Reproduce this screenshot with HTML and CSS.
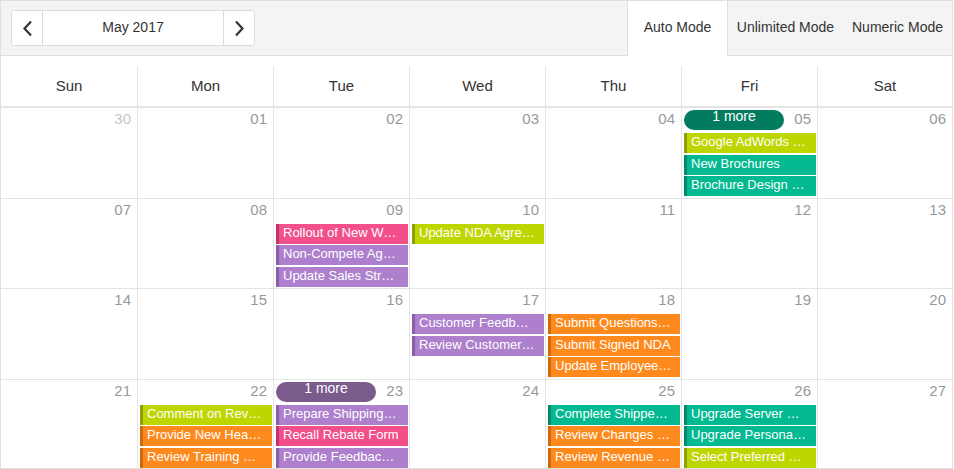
FILE: index.html
```html
<!DOCTYPE html>
<html>
<head>
<meta charset="utf-8">
<link rel="stylesheet" href="styles.css">
</head>
<body>
<div class="scheduler">
  <div class="toolbar">
    <div class="nav">
      <div class="nav-btn prev"><svg width="11" height="17" viewBox="0 0 11 17"><polyline points="9,1.5 2.5,8.5 9,15.5" fill="none" stroke="#333" stroke-width="2.2"/></svg></div>
      <div class="nav-caption">May 2017</div>
      <div class="nav-btn next"><svg width="11" height="17" viewBox="0 0 11 17"><polyline points="2,1.5 8.5,8.5 2,15.5" fill="none" stroke="#333" stroke-width="2.2"/></svg></div>
    </div>
    <div class="tabs">
      <div class="tab tab-auto active">Auto Mode</div>
      <div class="tab tab-unlimited">Unlimited Mode</div>
      <div class="tab tab-numeric">Numeric Mode</div>
    </div>
  </div>
  <div class="head">
    <div class="hcell">Sun</div><div class="hcell">Mon</div><div class="hcell">Tue</div><div class="hcell">Wed</div><div class="hcell">Thu</div><div class="hcell">Fri</div><div class="hcell">Sat</div>
  </div>
  <div class="grid">
    <div class="cell"><div class="top"><span class="date other">30</span></div></div>
    <div class="cell"><div class="top"><span class="date">01</span></div></div>
    <div class="cell"><div class="top"><span class="date">02</span></div></div>
    <div class="cell"><div class="top"><span class="date">03</span></div></div>
    <div class="cell"><div class="top"><span class="date">04</span></div></div>
    <div class="cell"><div class="top"><span class="more more-green">1 more</span><span class="date">05</span></div>
      <div class="appt lime">Google AdWords Strategy</div>
      <div class="appt teal">New Brochures</div>
      <div class="appt teal">Brochure Design Review</div>
    </div>
    <div class="cell"><div class="top"><span class="date">06</span></div></div>

    <div class="cell"><div class="top"><span class="date">07</span></div></div>
    <div class="cell"><div class="top"><span class="date">08</span></div></div>
    <div class="cell"><div class="top"><span class="date">09</span></div>
      <div class="appt pink">Rollout of New Website and Marketing Brochures</div>
      <div class="appt purple">Non-Compete Agreements</div>
      <div class="appt purple">Update Sales Strategy Documents</div>
    </div>
    <div class="cell"><div class="top"><span class="date">10</span></div>
      <div class="appt lime">Update NDA Agreement</div>
    </div>
    <div class="cell"><div class="top"><span class="date">11</span></div></div>
    <div class="cell"><div class="top"><span class="date">12</span></div></div>
    <div class="cell"><div class="top"><span class="date">13</span></div></div>

    <div class="cell"><div class="top"><span class="date">14</span></div></div>
    <div class="cell"><div class="top"><span class="date">15</span></div></div>
    <div class="cell"><div class="top"><span class="date">16</span></div></div>
    <div class="cell"><div class="top"><span class="date">17</span></div>
      <div class="appt purple">Customer Feedback Report Analysis</div>
      <div class="appt purple">Review Customer Feedback Report</div>
    </div>
    <div class="cell"><div class="top"><span class="date">18</span></div>
      <div class="appt orange">Submit Questions Regarding New NDA</div>
      <div class="appt orange">Submit Signed NDA</div>
      <div class="appt orange">Update Employee Files with New NDA</div>
    </div>
    <div class="cell"><div class="top"><span class="date">19</span></div></div>
    <div class="cell"><div class="top"><span class="date">20</span></div></div>

    <div class="cell"><div class="top"><span class="date">21</span></div></div>
    <div class="cell"><div class="top"><span class="date">22</span></div>
      <div class="appt lime">Comment on Revenue Projections</div>
      <div class="appt orange">Provide New Health Insurance Docs</div>
      <div class="appt orange">Review Training Course for any Omissions</div>
    </div>
    <div class="cell"><div class="top"><span class="more more-purple">1 more</span><span class="date">23</span></div>
      <div class="appt purple">Prepare Shipping Cost Analysis Report</div>
      <div class="appt pink">Recall Rebate Form</div>
      <div class="appt purple">Provide Feedback on Shippers</div>
    </div>
    <div class="cell"><div class="top"><span class="date">24</span></div></div>
    <div class="cell"><div class="top"><span class="date">25</span></div>
      <div class="appt teal">Complete Shipper Selection Form</div>
      <div class="appt orange">Review Changes to Health Insurance Coverage</div>
      <div class="appt orange">Review Revenue Projections</div>
    </div>
    <div class="cell"><div class="top"><span class="date">26</span></div>
      <div class="appt teal">Upgrade Server Hardware</div>
      <div class="appt teal">Upgrade Personal Computers</div>
      <div class="appt lime">Select Preferred Shipper</div>
    </div>
    <div class="cell"><div class="top"><span class="date">27</span></div></div>
  </div>
</div>
</body>
</html>
```

FILE: styles.css
```css
* { box-sizing: border-box; }
html, body { margin: 0; padding: 0; background: #fff; }
body { font-family: "Liberation Sans", Arial, sans-serif; color: #333; }

.scheduler {
  width: 953px;
  height: 469px;
  border: 1px solid #e0e0e0;
  display: flex;
  flex-direction: column;
}

.toolbar {
  height: 55px;
  flex: none;
  background: #f4f4f4;
  border-bottom: 1px solid #e0e0e0;
  display: flex;
  justify-content: space-between;
}

.nav {
  margin: 9px 0 0 10px;
  height: 36px;
  display: flex;
  border: 1px solid #dcdcdc;
  border-radius: 3px;
  background: #fff;
}
.nav-btn {
  display: flex;
  align-items: center;
  justify-content: center;
  width: 31px;
}
.nav-btn.prev { border-right: 1px solid #dcdcdc; padding-left: 1px; }
.nav-btn.next { border-left: 1px solid #dcdcdc; }
.nav-caption {
  width: 180px;
  text-align: center;
  font-size: 14px;
  line-height: 32px;
  color: #333;
}

.tabs { display: flex; height: 55px; }
.tab {
  font-size: 14px;
  line-height: 52px;
  text-align: center;
  color: #333;
}
.tab-auto { width: 101px; }
.tab-unlimited { width: 115px; }
.tab-numeric { width: 109px; }
.tab.active {
  background: #fff;
  border-left: 1px solid #e0e0e0;
  border-right: 1px solid #e0e0e0;
  height: 55px;
}

.head {
  flex: none;
  padding-top: 10px;
  display: grid;
  grid-template-columns: 137px repeat(5, 136px) 1fr;
  border-bottom: 2px solid #e4e4e4;
}
.hcell {
  height: 40px;
  line-height: 39px;
  text-align: center;
  font-size: 15px;
  color: #333;
  border-right: 1px solid #e4e4e4;
}
.hcell:last-child { border-right: none; }

.grid {
  flex: 1;
  display: grid;
  grid-template-columns: 137px repeat(5, 136px) 1fr;
  grid-template-rows: repeat(4, 1fr);
}
.cell {
  border-right: 1px solid #e4e4e4;
  border-bottom: 1px solid #e4e4e4;
  padding: 2px 1px 0 2px;
  min-width: 0;
  overflow: hidden;
}
.cell:nth-child(7n) { border-right: none; }
.cell:nth-last-child(-n+7) { border-bottom: none; }

.top {
  height: 20px;
  display: flex;
  justify-content: flex-end;
  margin-bottom: 3px;
  position: relative;
}
.date {
  font-size: 15px;
  line-height: 17px;
  color: #999;
  padding-right: 5px;
}
.date.other { color: #c8c8c8; }

.more {
  position: absolute;
  left: 0;
  top: 0;
  width: 100px;
  height: 20px;
  border-radius: 10px;
  color: #fff;
  font-size: 14px;
  line-height: 13px;
  text-align: center;
}
.more-green { background: #037b5f; }
.more-purple { background: #7b5a8c; }

.appt {
  height: 20px;
  margin-bottom: 1.5px;
  color: #fff;
  font-size: 13px;
  line-height: 17px;
  padding: 0 8.5px 0 4px;
  border-left: 3px solid;
  white-space: nowrap;
  overflow: hidden;
  text-overflow: ellipsis;
}
.lime { background: #bdd600; border-left-color: #8fa100; }
.teal { background: #02b991; border-left-color: #03896c; }
.pink { background: #f34f8b; border-left-color: #c0346a; }
.purple { background: #ad7fcd; border-left-color: #8a5fa9; }
.orange { background: #fe891d; border-left-color: #cf6a0c; }
```
